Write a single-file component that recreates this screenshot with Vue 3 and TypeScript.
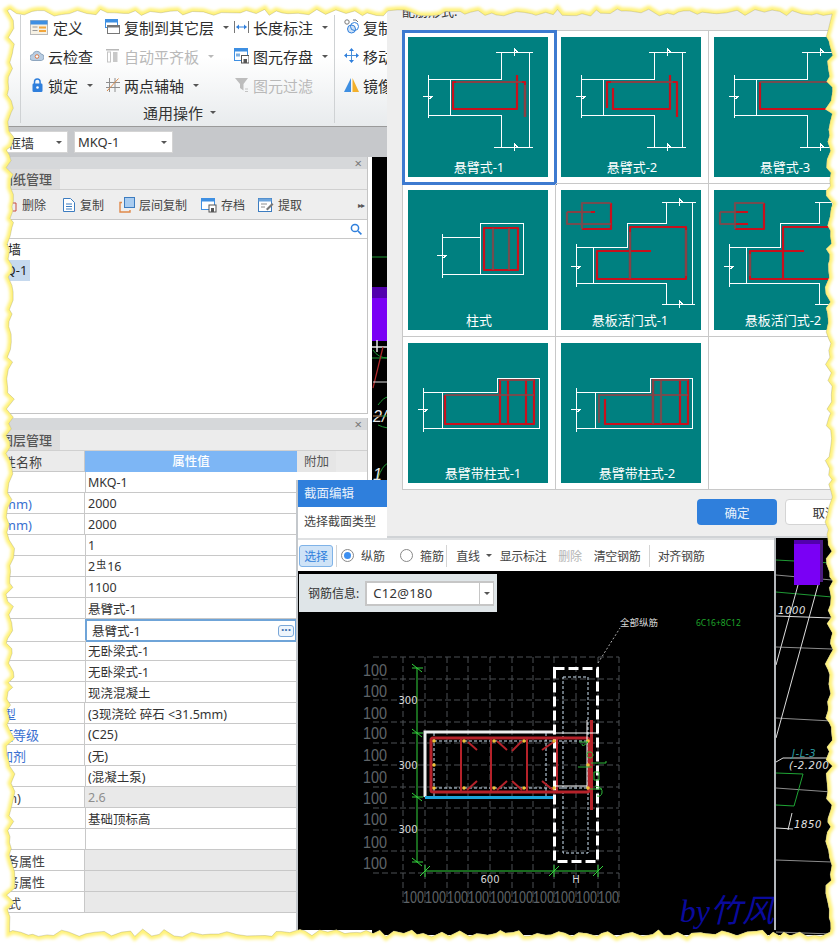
<script setup lang="ts">
interface RibbonItem { text: string; w: number; icon: string; caret?: boolean; off?: boolean }

const ribbonColumns: { width: number; items: RibbonItem[] }[] = [
  { width: 75, items: [
    { text: '定义', w: 19, icon: '<rect x=".5" y="1.5" width="17" height="14" fill="#f6f1e4" stroke="#b9b9b9"/><rect x=".5" y="1.5" width="17" height="4" fill="#3e8fe2"/><rect x="9" y="7.5" width="7" height="2" fill="#f2a63c"/><rect x="9" y="11" width="7" height="2" fill="#f2a63c"/><rect x="2.5" y="7.5" width="5" height="1" fill="#999"/><rect x="2.5" y="11" width="5" height="1" fill="#999"/>' },
    { text: '云检查', w: 14, icon: '<path d="M3 12.5a3 3 0 0 1-.3-6A4.4 4.4 0 0 1 11 6a3.3 3.3 0 0 1 .5 6.5z" fill="#b9cde2" stroke="#8ea6bf"/><circle cx="7" cy="8.5" r="1.8" fill="#fff" stroke="#d97a4a"/>' },
    { text: '锁定', w: 14, caret: true, icon: '<path d="M4.5 7V4.8a2.8 2.8 0 0 1 5.6 0V7" fill="none" stroke="#2f7fdc" stroke-width="1.5"/><rect x="2.5" y="6.5" width="10" height="8.5" rx="1.2" fill="#2f7fdc"/><circle cx="7.5" cy="10.5" r="1.3" fill="#fff"/>' }
  ] },
  { width: 129, items: [
    { text: '复制到其它层', w: 15, caret: true, icon: '<rect x=".5" y=".5" width="12" height="8" fill="#fff" stroke="#3e8fe2"/><rect x=".5" y=".5" width="12" height="3" fill="#3e8fe2"/><rect x="2.5" y="6.5" width="12" height="8" fill="#fff" stroke="#777"/><rect x="2.5" y="6.5" width="12" height="2" fill="#777"/>' },
    { text: '自动平齐板', w: 15, caret: true, off: true, icon: '<rect x="1" y="1" width="13" height="1.5" fill="#b8b8b8"/><rect x="2.5" y="4" width="3" height="10" fill="none" stroke="#c4c4c4"/><rect x="8" y="4" width="4.5" height="10" fill="#c9c9c9"/>' },
    { text: '两点辅轴', w: 15, caret: true, icon: '<path d="M4.5 1v14M10 1v14M1 5.5h14M1 10.5h14" stroke="#8e8e8e" fill="none"/><path d="M2 14 13.5 1.5" stroke="#d98a4a" fill="none"/>' }
  ] },
  { width: 101, items: [
    { text: '长度标注', w: 15, caret: true, icon: '<path d="M.5 2v12M14.5 2v12" stroke="#777" fill="none"/><path d="M2.5 8h10" stroke="#2f7fdc" fill="none"/><path d="M5 5.5 2.2 8 5 10.5zM10 5.5 12.8 8 10 10.5z" fill="#2f7fdc"/>' },
    { text: '图元存盘', w: 15, caret: true, icon: '<rect x=".5" y=".5" width="13" height="12" fill="#fff" stroke="#3e8fe2"/><rect x=".5" y=".5" width="13" height="3" fill="#3e8fe2"/><rect x="2" y="5.5" width="4" height="3" fill="#7fb0e0"/><rect x="7.5" y="7.5" width="7.5" height="7.5" fill="#fff" stroke="#555"/><rect x="9.5" y="11" width="3.5" height="4" fill="#555"/>' },
    { text: '图元过滤', w: 15, off: true, icon: '<path d="M1 1h13L9.5 7v6.5L6 11V7z" fill="#bdbdbd"/><path d="M11 12h3M11 14.5h3" stroke="#c4c4c4" fill="none"/>' }
  ] },
  { width: 70, items: [
    { text: '复制', w: 15, icon: '<circle cx="3" cy="3" r="2.2" fill="#fff" stroke="#777"/><circle cx="7.5" cy="10" r="4" fill="#cfe2f6" stroke="#2f7fdc"/><circle cx="10.5" cy="7.5" r="4" fill="none" stroke="#2f7fdc"/><path d="M9 1h3l2 2" fill="none" stroke="#777"/>' },
    { text: '移动', w: 15, icon: '<path d="M7.5 3v9M3 7.5h9" stroke="#4a90d9" fill="none"/><path d="M7.5 0 10 3H5zM7.5 15 5 12h5zM0 7.5 3 5v5zM15 7.5 12 10V5z" fill="#2f7fdc"/>' },
    { text: '镜像', w: 15, icon: '<path d="M7 1v14H0z" fill="#3e8fe2"/><path d="M8.5 1v14H15z" fill="#f2b02c"/>' }
  ] }
]

const toolActions = [
  { text: '删除', w: 9, gap: 5, ml: 8, icon: '<path d="M1 6h7v8H1z" fill="none" stroke="#c94d3f"/>' },
  { text: '复制', w: 14, gap: 4, ml: 16, icon: '<path d="M1.5 1.5h7l4 4v9h-11z" fill="#fff" stroke="#3c7cc0"/><path d="M4 7h6M4 9.5h6M4 12h6" stroke="#3c7cc0"/>' },
  { text: '层间复制', w: 16, gap: 4, ml: 15, icon: '<path d="M3 5.5H1v9.5h10v-2" fill="none" stroke="#e0894a" stroke-width="1.4"/><rect x="5.5" y=".5" width="10" height="10" fill="#a9ccf0" stroke="#3c7cc0"/>' },
  { text: '存档', w: 16, gap: 4, ml: 14, icon: '<rect x=".5" y="1.5" width="13" height="11" fill="#fff" stroke="#3e8fe2"/><rect x=".5" y="1.5" width="13" height="3" fill="#3e8fe2"/><rect x="8" y="8" width="7" height="7" fill="#fff" stroke="#555"/><rect x="10" y="11" width="3" height="4" fill="#555"/>' },
  { text: '提取', w: 16, gap: 4, ml: 13, icon: '<rect x=".5" y="1.5" width="13" height="13" fill="#fff" stroke="#3c7cc0"/><rect x=".5" y="1.5" width="13" height="3" fill="#6ea5dc"/><path d="M3 7h6M3 10h4" stroke="#8e8e8e"/><path d="M8 12 14 6l1.5 1.5-6 6z" fill="#777"/>' }
]

interface PropRow { name: string; end: number; value: string; blue?: boolean; gray?: boolean; sel?: boolean; dim?: boolean; sym?: boolean }
const rows: PropRow[] = [
  { name: '名称', end: 0, value: 'MKQ-1' },
  { name: '洞口宽度(mm)', end: 33, value: '2000', blue: true },
  { name: '洞口高度(mm)', end: 33, value: '2000', blue: true },
  { name: '数量', end: 0, value: '1' },
  { name: '钢筋', end: 0, value: '216', sym: true },
  { name: '标高', end: 0, value: '1100' },
  { name: '截面形状', end: 0, value: '悬臂式-1' },
  { name: '配筋形式', end: 0, value: '悬臂式-1', sel: true },
  { name: '上部', end: 0, value: '无卧梁式-1' },
  { name: '下部', end: 0, value: '无卧梁式-1' },
  { name: '类型', end: 0, value: '现浇混凝土' },
  { name: '混凝土类型', end: 17, value: '(3现浇砼 碎石 <31.5mm)', blue: true },
  { name: '混凝土强度等级', end: 40, value: '(C25)', blue: true },
  { name: '混凝土外加剂', end: 27, value: '(无)', blue: true },
  { name: '泵送', end: 0, value: '(混凝土泵)' },
  { name: '厚度(m)', end: 22, value: '2.6', dim: true, gray: true },
  { name: '底标高', end: 0, value: '基础顶标高' },
  { name: '备注', end: 0, value: '' },
  { name: '钢筋业务属性', end: 46, value: '', gray: true },
  { name: '土建业务属性', end: 46, value: '', gray: true },
  { name: '显示样式', end: 22, value: '', gray: true }
]

// Drawing helpers for the gallery thumbnails
const brk = (x: number, y: number) => `M${x - 5} ${y}h10l-5 4v-8`
const topBrk = (x: number, y: number) => `M${x} ${y - 4}v8M${x} ${y - 3}l4 3M${x} ${y + 1}l-4-1`

const cantiWhite = `M20 38V81M20 42H93V15M88 15H125M121 15V110M86 110H125M93 110V78H20M42 42V78${brk(20, 59)}${topBrk(106, 15)}${topBrk(106, 110)}`
const flapWhite = `M101 12H135M131 12V114M101 114H134M105 12V33H66V57H15M15 54V97M15 93H105V114M32 57V93${brk(15, 76)}${topBrk(118, 12)}${topBrk(118, 114)}`
const bandWhite = `M15 45V89M15 49H89V35H132M131 35V85H15M34 49V85${brk(15, 66)}`

interface Thumb { label: string; lx: number; white: string; red: string; dark: string; sel?: boolean; empty?: boolean }
const thumbs: Thumb[] = [
  { label: '悬臂式-1', lx: 71, sel: true, white: cantiWhite,
    red: 'M117 80V45H45V72H109V38', dark: 'M48 45H114M117 48V80' },
  { label: '悬臂式-2', lx: 71, white: cantiWhite,
    red: 'M52 51V72H109V38M46 71V45H116V80', dark: 'M50 45H112' },
  { label: '悬臂式-3', lx: 71, white: cantiWhite,
    red: 'M46 45V72H125', dark: 'M46 45H116' },
  { label: '柱式', lx: 71, white: `M72 33H115V84H72ZM72 47H34M72 84H34M34 44V88${brk(34, 65)}`,
    red: 'M76 38H110V80H76Z', dark: 'M85 38V80M101 38V80' },
  { label: '悬板活门式-1', lx: 69, white: flapWhite,
    red: 'M90 61H36V89H125V37H69V89M21 39H50V13M34 22H6', dark: 'M69 42V89M125 40V86M21 39V13H50M6 22V34H50M6 22H30' },
  { label: '悬板活门式-2', lx: 69, white: flapWhite,
    red: 'M90 61H36V89H125V37H69V89M21 39H50V13M34 22H21M34 34H21', dark: 'M36 64V86M21 39V13H50M6 22V34H21M6 22H21' },
  { label: '悬臂带柱式-1', lx: 75, white: bandWhite,
    red: 'M37 52V81H126V37H92V81M100 37V81M118 37V81', dark: 'M37 52H126M92 37H126' },
  { label: '悬臂带柱式-2', lx: 76, white: bandWhite,
    red: 'M44 56V81H127V37H92V81M119 37V81', dark: 'M38 80V52H127M100 37V81M92 37H127M92 37V81' },
  { label: '', lx: 0, white: '', red: '', dark: '', empty: true }
]

const hGrid = [657, 679, 700, 722, 743, 765, 787, 808, 830, 851, 873]
const vGrid = [403, 425, 447, 468, 490, 512, 533, 554, 576, 598, 619]
const bottomLabels = vGrid.slice(0, 10)
const leftLabels = [670, 691, 713, 733, 755, 777, 798, 819, 842, 863]
const bars = [461, 491, 527, 557]
const dotX = [434, 464, 494, 524, 554, 588]
const hoops = [
  'M468 742l9 8', 'M497 741l10 9', 'M522 741l-10 10', 'M555 741l-13 9',
  'M467 790l10-9', 'M497 790l10-9', 'M522 790l-10-9', 'M553 790l-11-9'
]

// Torn-paper outline round the picture (seeded so every render is the same)
let seed = 71
const rnd = () => { seed = (seed * 16807) % 2147483647; return seed / 2147483647 }
const edge = () => {
  const p: string[] = []
  for (let x = 10; x < 828; x += 4 + rnd() * 7) p.push(`${x.toFixed(1)} ${(9 + rnd() * 7).toFixed(1)}`)
  for (let y = 14; y < 932; y += 4 + rnd() * 6) p.push(`${(825 + rnd() * 8).toFixed(1)} ${y.toFixed(1)}`)
  for (let x = 830; x > 12; x -= 4 + rnd() * 7) p.push(`${x.toFixed(1)} ${(929 + rnd() * 8).toFixed(1)}`)
  for (let y = 932; y > 10; y -= 4 + rnd() * 6) p.push(`${(6 + rnd() * 9).toFixed(1)} ${y.toFixed(1)}`)
  return 'M' + p.join('L') + 'Z'
}
const tornEdge = edge()
const tornRing = `M0 0H839V947H0Z${tornEdge}`
</script>

<template>
  <div class="app">
    <header class="ribbon">
      <section class="rib-group">
        <div class="rib-grid">
          <div v-for="col in ribbonColumns.slice(0, 3)" :key="col.width" class="rib-col" :style="{ width: col.width + 'px' }">
            <div v-for="it in col.items" :key="it.text" class="rib-item" :class="{ off: it.off }">
              <svg :width="it.w" height="16" :viewBox="`0 0 ${it.w} 16`" v-html="it.icon"></svg>
              <span>{{ it.text }}</span>
              <i v-if="it.caret" class="caret"></i>
            </div>
          </div>
        </div>
        <div class="rib-label">通用操作<i class="caret"></i></div>
      </section>
      <section class="rib-group2">
        <div v-for="it in ribbonColumns[3].items" :key="it.text" class="rib-item">
          <svg :width="it.w" height="16" :viewBox="`0 0 ${it.w} 16`" v-html="it.icon"></svg>
          <span>{{ it.text }}</span>
        </div>
      </section>
    </header>

    <div class="combo-bar">
      <div class="combo c1"><span>框墙</span><i class="caret"></i></div>
      <div class="combo c2"><span>MKQ-1</span><i class="caret"></i></div>
    </div>

    <main class="body">
      <aside class="side">
        <div class="panel panel-a">
          <div class="p-title"><span>×</span></div>
          <div class="p-tabs"><span class="p-tab">图纸管理</span></div>
          <div class="p-tools">
            <div v-for="a in toolActions" :key="a.text + a.ml" class="p-tool" :style="{ marginLeft: a.ml + 'px', gap: a.gap + 'px' }">
              <svg :width="a.w" height="16" :viewBox="`0 0 ${a.w} 16`" v-html="a.icon"></svg>
              <span>{{ a.text }}</span>
            </div>
            <span class="more">▸▸</span>
          </div>
          <div class="p-search">
            <svg width="12" height="12" viewBox="0 0 12 12"><circle cx="5" cy="5" r="3.6" fill="none" stroke="#2f7fdc" stroke-width="1.5"/><path d="M8 8l3.4 3.4" stroke="#2f7fdc" stroke-width="1.6"/></svg>
          </div>
          <div class="p-list">
            <div class="li">框墙</div>
            <div class="li on">MKQ-1</div>
          </div>
        </div>
        <div class="panel panel-b">
          <div class="p-title"><span>×</span></div>
          <div class="p-tabs"><span class="p-tab">图层管理</span></div>
          <div class="t-row t-head">
            <div class="t-name end43">属性名称</div>
            <div class="t-val">属性值</div>
            <div class="t-add">附加</div>
          </div>
          <div v-for="r in rows" :key="r.name" class="t-row">
            <div class="t-name" :class="{ blue: r.blue }" :style="{ paddingRight: 85 - r.end + 'px' }">{{ r.end ? r.name : '' }}</div>
            <div class="t-cell" :class="{ gray: r.gray, dim: r.dim, sel: r.sel }">
              <template v-if="r.sym">2<small class="sym">虫</small>16</template>
              <template v-else>{{ r.value }}</template>
              <b v-if="r.sel" class="dots">···</b>
            </div>
            <div class="t-extra"></div>
          </div>
        </div>
      </aside>
      <div class="strip"></div>
      <div class="cad"></div>
    </main>

    <!-- CAD drawing behind the dialogs -->
    <svg class="cad-left" width="16" height="323" viewBox="372 157 16 323">
      <path d="M372 257H388" stroke="#1f9a35"/>
      <rect x="372" y="287" width="16" height="11" fill="#5200ad"/>
      <rect x="372" y="298" width="16" height="43" fill="#7a00f5"/>
      <path d="M372 358H388" stroke="#1f9a35"/>
      <path d="M373 350q5 8 15 8" fill="none" stroke="#1f9a35"/>
      <path d="M377 340V352M372 347H388" stroke="#e6e6e6" stroke-width="1.5"/>
      <path d="M383 347 373 388" stroke="#b22a2a" stroke-width="1.2"/>
      <path d="M373 382H388" stroke="#ddd"/>
      <text x="373" y="422" class="cad-t">2/</text>
      <path d="M378 405q6-8 10-8M378 425q4 2 10 3M373 416H388" fill="none" stroke="#1f9a35"/>
      <path d="M373 416H382" stroke="#a33"/>
      <path d="M378 478q4-12 10-15" fill="none" stroke="#1f9a35"/>
      <text x="373" y="480" class="cad-t">1</text>
    </svg>
    <svg class="cad-right" width="63" height="397" viewBox="776 540 63 397">
      <path d="M776 560 832 563M776 592 832 597" stroke="#1f9a35"/>
      <path d="M776 575 832 580M776 647 832 649M776 718 832 721M776 788 832 792M776 860 832 862M776 932 832 934" stroke="#8c8c8c"/>
      <path d="M776 616 832 618M798 585 776 665M818 585 776 738" stroke="#dcdcdc"/>
      <rect x="794" y="542" width="26" height="43" fill="#7a00f5"/>
      <rect x="794" y="540" width="28" height="4" fill="#5200ad"/>
      <rect x="820" y="540" width="3" height="42" fill="#4a1a80"/>
      <text x="778" y="614" class="cad-i">1000</text>
      <path d="M776 773 803 774 794 806 776 805" fill="none" stroke="#1fa535"/>
      <path d="M776 762 783 758H832" fill="none" stroke="#ddd"/>
      <text x="792" y="757" class="cad-i teal">J-L-3</text>
      <text x="789" y="769" class="cad-i">(-2.200</text>
      <path d="M792 813 788 830M776 828 793 829" stroke="#ddd"/>
      <text x="794" y="828" class="cad-i">1850</text>
    </svg>

    <!-- Section editor window -->
    <section class="editor">
      <div class="ed-title">截面编辑</div>
      <div class="ed-tabs"><span>选择截面类型</span></div>
      <div class="ed-tools">
        <button class="tb active">选择</button>
        <i class="sep"></i>
        <label class="radio r1"><i class="dot on"></i>纵筋</label>
        <label class="radio r2"><i class="dot"></i>箍筋</label>
        <i class="sep"></i>
        <button class="tb line">直线<i class="caret"></i></button>
        <button class="tb show">显示标注</button>
        <button class="tb del">删除</button>
        <button class="tb clr">清空钢筋</button>
        <i class="sep"></i>
        <button class="tb ali">对齐钢筋</button>
      </div>
      <div class="ed-canvas">
        <svg class="section" width="476" height="359" viewBox="298 571 476 359">
          <g stroke="#4c5155" stroke-dasharray="6 3" fill="none">
            <path v-for="y in hGrid" :key="y" :d="`M373 ${y}H619`"/>
            <path v-for="x in vGrid" :key="x" :d="`M${x} 657V903`"/>
          </g>
          <text v-for="y in leftLabels" :key="y" x="363" :y="y + 6" textLength="24" lengthAdjust="spacingAndGlyphs" class="grid-t">100</text>
          <text v-for="x in bottomLabels" :key="x" :x="x" y="903" textLength="21" lengthAdjust="spacingAndGlyphs" class="grid-t">100</text>

          <path d="M425 797V732H554" fill="none" stroke="#eee" stroke-width="3"/>
          <path d="M425 797.5H554" stroke="#1ba4dc" stroke-width="3"/>
          <rect x="554.5" y="668.5" width="43" height="193" fill="none" stroke="#fff" stroke-width="3" stroke-dasharray="10 4"/>
          <rect x="563" y="677" width="25" height="176" fill="none" stroke="#cfe4f5" stroke-dasharray="3 2"/>
          <path d="M546 733V798M434 741H590M434 788H590M434 733V798" fill="none" stroke="#cfe4f5" stroke-dasharray="3 2"/>

          <rect x="431" y="738" width="158" height="54" rx="2" fill="none" stroke="#b5222a" stroke-width="3"/>
          <path v-for="x in bars" :key="x" :d="`M${x} 738V792`" stroke="#b5222a" stroke-width="2"/>
          <path v-for="h in hoops" :key="h" :d="h" stroke="#b5222a" stroke-width="2"/>
          <path d="M591.5 720V810" stroke="#b5222a" stroke-width="3"/>
          <path d="M587 720V788M554 786H587M554 733H598" fill="none" stroke="#fff"/>

          <g fill="#f0c23a">
            <template v-for="x in dotX" :key="x">
              <circle :cx="x" cy="741" r="1.8"/>
              <circle :cx="x" cy="788" r="1.8"/>
            </template>
            <circle cx="434" cy="765" r="1.8"/>
            <circle cx="588" cy="765" r="1.8"/>
          </g>

          <g stroke="#33d33c" fill="none">
            <path d="M417 668V862M425 871H598"/>
            <path d="M412 668h11M412 733h11M412 797h11M412 862h11M412 664l10 8M412 729l10 8M412 793l10 8M412 858l10 8"/>
            <path d="M425 865v12M554 865v12M598 865v12M420 876l10-10M549 876l10-10M593 876l10-10"/>
            <path d="M579 742h9q-6 6-6 2M588 752q-3 6 3 6 4-3 0-6zM578 767h14M591 763h15v-2M594 780v-8h5v8zM590 789h12M595 786q8 1 7 7-1 4-5 3" stroke="#2fb83a"/>
          </g>

          <g class="dim-t">
            <text x="408" y="704">300</text>
            <text x="408" y="769">300</text>
            <text x="408" y="833">300</text>
            <text x="490" y="883">600</text>
            <text x="576" y="883">H</text>
          </g>
          <path d="M598 663 620 628" stroke="#aaa" stroke-dasharray="2 2"/>
          <text x="620" y="626" class="note">全部纵筋</text>
          <text x="696" y="626" class="note green">6C16+8C12</text>
        </svg>
        <div class="info">
          <span>钢筋信息:</span>
          <div class="info-input">
            <span class="val">C12@180</span>
            <span class="drop"><i class="caret"></i></span>
          </div>
        </div>
        <div class="wm">by竹风</div>
      </div>
    </section>

    <!-- Section type dialog -->
    <section class="dialog">
      <div class="dlg-title">配筋形式:</div>
      <div class="gallery">
        <div v-for="t in thumbs" :key="t.label" class="cell" :class="{ selected: t.sel }">
          <svg v-if="!t.empty" class="thumb" width="140" height="140" viewBox="0 0 140 140">
            <path :d="t.white" fill="none" stroke="#fff" shape-rendering="crispEdges"/>
            <path :d="t.red" fill="none" stroke="#c8101c" stroke-width="2.2" stroke-linejoin="round"/>
            <path :d="t.dark" fill="none" stroke="#80474a" stroke-width="2.2" stroke-linejoin="round" opacity=".9"/>
            <text :x="t.lx" y="135" text-anchor="middle" class="thumb-t">{{ t.label }}</text>
          </svg>
        </div>
      </div>
      <div class="dlg-actions">
        <button class="ok">确定</button>
        <button class="cancel">取消</button>
      </div>
    </section>

    <svg class="torn" width="839" height="947" viewBox="0 0 839 947">
      <defs>
        <clipPath id="ring"><path :d="tornRing" clip-rule="evenodd"/></clipPath>
        <filter id="soft" x="-5%" y="-5%" width="110%" height="110%"><feGaussianBlur stdDeviation="1.4"/></filter>
      </defs>
      <path :d="tornRing" fill="#fff" fill-rule="evenodd"/>
      <g clip-path="url(#ring)">
        <path :d="tornEdge" fill="none" stroke="#fff27a" stroke-width="7" filter="url(#soft)"/>
      </g>
      <path :d="tornEdge" fill="none" stroke="#8c8a5a" stroke-width=".5" opacity=".6"/>
    </svg>
  </div>
</template>

<style scoped>
.app {
  position: relative;
  width: 839px;
  height: 947px;
  overflow: hidden;
  background: #fff;
  color: #333;
  font-family: "Noto Sans", "Noto Sans CJK SC", sans-serif;
  font-size: 12.5px;
}
.caret {
  display: inline-block;
  width: 0;
  height: 0;
  border-left: 3px solid transparent;
  border-right: 3px solid transparent;
  border-top: 3px solid #555;
}
.ribbon {
  display: flex;
  height: 127px;
  box-sizing: border-box;
  padding-left: 20px;
  background: linear-gradient(#fff 45%, #e8ebed);
  border-bottom: 1px solid #9a9a9a;
}
.rib-group {
  width: 315px;
  flex: none;
  border-left: 1px solid #cfd2d4;
  border-right: 1px solid #cfd2d4;
  box-sizing: border-box;
  margin-top: 15px;
  margin-bottom: 3px;
}
.rib-grid { display: flex; padding-left: 9px; }
.rib-col { display: flex; flex-direction: column; gap: 5px; flex: none; }
.rib-item {
  display: flex;
  align-items: center;
  height: 24px;
  gap: 4px;
  font-size: 15px;
  white-space: nowrap;
  color: #2d2d2d;
}
.rib-item .caret { margin-left: 5px; }
.rib-item.off { color: #b9b9b9; }
.rib-item.off .caret { border-top-color: #b9b9b9; }
.rib-label {
  display: flex;
  align-items: center;
  justify-content: center;
  gap: 7px;
  margin-top: 2px;
  padding-left: 4px;
  font-size: 15px;
  height: 26px;
}
.rib-group2 { margin-top: 15px; padding-left: 9px; display: flex; flex-direction: column; gap: 5px; }
.combo-bar {
  display: flex;
  align-items: center;
  gap: 6px;
  height: 30px;
  box-sizing: border-box;
  background: #c6c8cb;
}
.combo {
  display: flex;
  align-items: center;
  justify-content: space-between;
  box-sizing: border-box;
  height: 22px;
  background: #fff;
  border: 1px solid #d4d4d4;
  padding: 0 5px 0 4px;
  font-size: 13px;
}
.c1 { width: 68px; padding-left: 7px; }
.c2 { width: 99px; padding-left: 3px; }
.body { display: flex; height: 790px; }
.side { width: 368px; flex: none; background: #fff; }
.strip { width: 4px; background: #fff; flex: none; }
.cad { flex: 1; background: #000; height: 778px; }
.panel { border-right: 1px solid #c4c4c4; box-sizing: border-box; }
.panel-a { height: 257px; border-bottom: 1px solid #c4c4c4; }
.panel-b { margin-top: 4px; }
.p-title {
  height: 12px;
  background: #d6d8da;
  position: relative;
  text-align: right;
  padding-right: 5px;
  color: #777;
  font-size: 13px;
  line-height: 12px;
}
.p-tabs {
  height: 20px;
  background: #ececec;
  border-bottom: 1px solid #d0d0d0;
}
.p-tab {
  display: block;
  width: 60px;
  height: 20px;
  line-height: 21px;
  box-sizing: border-box;
  background: #dddddd;
  font-size: 13px;
  color: #555;
  font-weight: 500;
  overflow: hidden;
  white-space: nowrap;
}
.p-tools {
  display: flex;
  align-items: center;
  height: 29px;
  background: #eeeeee;
  border-bottom: 1px solid #c8c8c8;
  font-size: 12px;
  color: #444;
}
.p-tool { display: flex; align-items: center; white-space: nowrap; }
.more { margin-left: auto; margin-right: 3px; font-size: 8px; color: #555; letter-spacing: -1px; }
.p-search {
  height: 18px;
  display: flex;
  justify-content: flex-end;
  align-items: center;
  padding-right: 5px;
  border-bottom: 1px solid #c8c8c8;
}
.p-list { font-size: 13px; }
.li { height: 21px; line-height: 21px; width: 30px; text-indent: -5px; overflow: hidden; white-space: nowrap; color: #222; }
.li.on { background: #c6d9ee; text-indent: -14px; }
.t-row { display: grid; grid-template-columns: 85px 212px 39px; height: 21px; box-sizing: border-box; }
.t-name {
  display: flex;
  justify-content: flex-end;
  align-items: center;
  white-space: nowrap;
  overflow: hidden;
  border-right: 1px solid #c8c8c8;
  border-bottom: 1px solid #c8c8c8;
  font-size: 13px;
  color: #444;
}
.t-name.blue { color: #3a6fd0; }
.t-cell {
  display: flex;
  align-items: center;
  padding-left: 3px;
  border-bottom: 1px solid #c8c8c8;
  color: #333;
  white-space: pre;
}
.t-cell.gray { background: #e9e9e9; }
.t-cell.dim { color: #8e8e8e; }
.t-cell.sel {
  border: 2px solid #6fa4d8;
  padding-left: 5px;
  box-sizing: border-box;
  justify-content: space-between;
  padding-right: 1px;
}
.dots {
  width: 16px;
  height: 12px;
  border: 1px solid #7aa7d8;
  border-radius: 3px;
  background: #eef5fc;
  line-height: 8px;
  font-size: 12px;
  color: #3c6fb0;
  text-align: center;
  box-sizing: border-box;
}
.sym { font-size: 10px; transform: translateY(-3px); padding: 0 1px; }
.t-extra { border-bottom: 1px solid #c8c8c8; }
.t-head { background: #eaeaea; }
.t-head .t-name { padding-right: 42px; background: #ebebeb; }
.t-val {
  background: #7db6f5;
  color: #fff;
  text-align: center;
  line-height: 21px;
  font-weight: 500;
}
.t-add { background: #e6e6e6; text-align: center; line-height: 21px; color: #555; }

.cad-left, .cad-right { position: absolute; }
.cad-left { left: 372px; top: 157px; }
.cad-right { left: 776px; top: 540px; }
.cad-t { fill: #e6e6e6; font: italic 16px "Liberation Sans", sans-serif; }
.cad-i { fill: #e4e4e4; font: italic 10px "DejaVu Sans", sans-serif; letter-spacing: .6px; }
.cad-i.teal { fill: #2c9ca0; }

.editor {
  position: absolute;
  left: 296px;
  top: 480px;
  width: 480px;
  height: 450px;
  box-sizing: border-box;
  background: #dfe1e3;
  border-left: 2px solid #c4c8cc;
  border-right: 2px solid #b4b8bc;
  display: flex;
  flex-direction: column;
}
.ed-title {
  height: 27px;
  line-height: 27px;
  background: #2f7fdc;
  color: #e8f1fb;
  padding-left: 6px;
  font-size: 12.5px;
  flex: none;
}
.ed-tabs {
  height: 31px;
  background: #fff;
  flex: none;
  padding-left: 6px;
  line-height: 29px;
  font-size: 12px;
  color: #444;
}
.ed-tools {
  display: flex;
  align-items: center;
  height: 31px;
  margin-top: 2px;
  background: #fff;
  flex: none;
  font-size: 12px;
  color: #444;
}
.tb {
  flex: none;
  height: 22px;
  padding: 0;
  border: 0;
  background: none;
  font: inherit;
  color: inherit;
  display: flex;
  align-items: center;
  justify-content: center;
  letter-spacing: -.3px;
  white-space: nowrap;
}
.tb.active {
  width: 34px;
  margin-left: 1px;
  background: #cfe3f7;
  border: 1px solid #7fb3e8;
  border-radius: 3px;
  color: #2f7fdc;
  box-sizing: border-box;
}
.sep { width: 1px; height: 22px; background: #d4d4d4; flex: none; }
.tb.active + .sep { margin-left: 3px; }
.radio { display: flex; align-items: center; gap: 7px; white-space: nowrap; }
.r1 { margin-left: 4px; }
.r2 { margin-left: 15px; margin-right: 2px; }
.dot {
  position: relative;
  width: 13px;
  height: 13px;
  box-sizing: border-box;
  border: 1px solid #888;
  border-radius: 50%;
  background: #fff;
}
.dot.on::after {
  content: "";
  position: absolute;
  left: 2px;
  top: 2px;
  width: 7px;
  height: 7px;
  border-radius: 50%;
  background: #3d8ff0;
}
.line { margin-left: 8px; gap: 6px; width: 38px; }
.show { margin-left: 7px; width: 46px; }
.del { margin-left: 12px; width: 24px; color: #b4b4b4; }
.clr { margin-left: 12px; width: 46px; margin-right: 9px; }
.ali { margin-left: 8px; width: 46px; }
.ed-canvas { position: relative; flex: 1; background: #000; overflow: hidden; }
.section { position: absolute; left: 0; top: 0; }
.grid-t { fill: #5f6468; font: 16px "Liberation Sans", sans-serif; }
.dim-t { fill: #d8d8d8; font: 10px "DejaVu Sans", sans-serif; text-anchor: middle; }
.note { fill: #d8d8d8; font: 9.5px "Noto Sans CJK SC", sans-serif; }
.note.green { fill: #1fa52a; font: 8.5px "Noto Sans", sans-serif; }
.info {
  position: absolute;
  left: 1px;
  top: 3px;
  width: 198px;
  height: 38px;
  box-sizing: border-box;
  padding-left: 9px;
  display: flex;
  align-items: center;
  gap: 6px;
  background: #dfe5e8;
  font-size: 12px;
  color: #333;
}
.info-input {
  display: flex;
  width: 129px;
  height: 25px;
  box-sizing: border-box;
  background: #fff;
  border: 2px solid #c6c6c6;
  border-right-width: 1px;
}
.val { flex: 1; padding-left: 6px; line-height: 21px; font-size: 13px; letter-spacing: .3px; }
.drop { width: 13px; border-left: 1px solid #c6c6c6; display: flex; align-items: center; justify-content: center; }
.wm {
  position: absolute;
  right: 0;
  bottom: 0;
  font: italic 32px/37px "Liberation Serif", "Noto Sans CJK SC", serif;
  color: #0a0a9c;
}

.dialog {
  position: absolute;
  left: 387px;
  top: 0;
  width: 452px;
  height: 538px;
  box-sizing: border-box;
  background: #eeeeee;
  padding-left: 15px;
  border-bottom: 2px solid #d0d3d6;
}
.dlg-title { height: 30px; padding-top: 1px; box-sizing: border-box; font-size: 13px; color: #333; }
.gallery {
  display: grid;
  grid-template-columns: repeat(3, 153px);
  grid-auto-rows: 153px;
  width: 460px;
  background: #fff;
  border-top: 1px solid #c8c8c8;
  border-left: 1px solid #c8c8c8;
}
.cell {
  box-sizing: border-box;
  border-right: 1px solid #c8c8c8;
  border-bottom: 1px solid #c8c8c8;
  display: flex;
  align-items: center;
  padding-left: 5px;
}
.cell.selected { outline: 3px solid #3d7ad0; outline-offset: -2px; }
.thumb { background: #008080; display: block; }
.thumb-t { fill: #fff; font-size: 13px; }
.dlg-actions { display: flex; gap: 8px; margin: 9px 0 0 295px; }
.dlg-actions button {
  flex: none;
  width: 80px;
  height: 26px;
  border-radius: 4px;
  font: inherit;
  font-size: 12.5px;
  padding: 0;
}
.ok { background: #2f7fdc; border: 0; color: #e8f1fb; }
.cancel { background: #fff; border: 1px solid #d4d4d4; color: #333; }
.torn { position: absolute; left: 0; top: 0; pointer-events: none; }
</style>
